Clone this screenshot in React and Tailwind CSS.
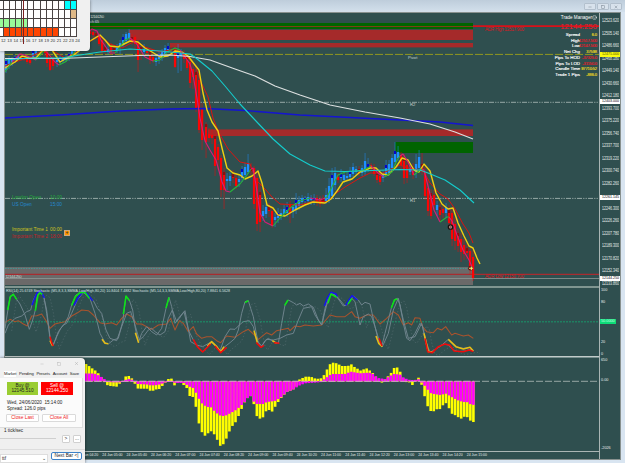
import { Minus, Square, X, Smile } from 'lucide-react';

// [x, high, bodyTop, bodyBottom, low, up]
const candles = [
    [6, 58, 61, 70, 73, 1], [9, 56, 59, 66, 69, 1], [12, 57, 59, 64, 66, 1], [15, 55, 57, 60, 63, 1], [18, 54, 56, 58, 60, 1], [21, 53, 56, 58, 60, 0],
    [24, 55, 57, 59, 61, 0], [27, 55, 58, 62, 64, 0], [30, 57, 60, 63, 65, 0], [33, 44, 50, 57, 59, 1], [36, 46, 48, 54, 57, 1], [39, 44, 48, 51, 54, 1],
    [42, 45, 48, 50, 52, 0], [45, 46, 49, 53, 56, 0], [47, 50, 52, 63, 67, 0], [50, 54, 56, 70, 71, 0], [53, 56, 58, 66, 70, 0], [57, 56, 60, 62, 67, 1],
    [60, 54, 59, 62, 64, 1], [63, 57, 59, 61, 63, 1], [66, 55, 57, 60, 62, 1], [69, 52, 54, 58, 61, 1], [72, 48, 51, 55, 58, 1], [75, 46, 49, 53, 56, 1],
    [78, 40, 44, 52, 55, 1], [81, 34, 38, 46, 50, 1], [84, 30, 34, 40, 44, 1], [87, 28, 32, 36, 40, 1], [90, 29, 31, 34, 38, 0], [93, 30, 32, 35, 38, 0],
    [96, 31, 33, 36, 38, 0], [99, 33, 36, 44, 46, 0], [102, 37, 40, 51, 54, 0], [105, 42, 47, 51, 54, 0], [108, 44, 49, 52, 55, 1], [111, 43, 47, 52, 55, 0],
    [114, 45, 48, 51, 54, 0], [117, 44, 48, 51, 53, 1], [120, 40, 43, 47, 54, 1], [123, 34, 37, 45, 47, 1], [126, 32, 34, 41, 44, 1], [129, 29, 33, 39, 41, 1],
    [132, 34, 37, 42, 45, 0], [135, 35, 37, 44, 50, 0], [138, 40, 43, 60, 72, 0], [141, 44, 47, 51, 60, 0], [144, 44, 49, 52, 57, 1], [147, 48, 51, 53, 56, 0],
    [150, 49, 52, 60, 64, 0], [153, 53, 57, 61, 63, 0], [156, 54, 58, 62, 66, 1], [159, 52, 54, 59, 64, 1], [162, 49, 51, 58, 61, 1], [165, 45, 48, 54, 57, 1],
    [168, 43, 46, 50, 53, 1], [171, 46, 49, 51, 54, 0], [175, 47, 50, 67, 68, 0], [178, 44, 53, 58, 73, 1], [181, 49, 53, 56, 71, 1], [184, 50, 53, 59, 63, 0],
    [187, 54, 57, 68, 70, 0], [190, 59, 62, 83, 88, 0], [193, 63, 69, 77, 89, 0], [196, 69, 72, 108, 112, 0], [199, 76, 80, 130, 133, 0], [202, 103, 108, 140, 150, 0],
    [206, 122, 124, 142, 158, 0], [209, 128, 134, 138, 142, 0], [212, 129, 135, 138, 144, 0], [215, 134, 136, 166, 176, 0], [218, 144, 147, 160, 170, 0],
    [221, 155, 158, 190, 197, 0], [224, 168, 172, 190, 209, 0], [227, 173, 179, 181, 190, 1], [230, 172, 176, 181, 186, 1], [233, 170, 174, 178, 183, 0],
    [236, 175, 178, 186, 189, 0], [239, 175, 179, 182, 187, 1], [242, 166, 169, 178, 182, 1], [245, 163, 167, 175, 177, 1], [248, 154, 163, 172, 174, 1],
    [251, 163, 168, 171, 175, 0], [254, 166, 168, 204, 209, 0], [257, 172, 178, 224, 231, 0], [260, 183, 192, 222, 232, 0], [263, 205, 211, 216, 221, 1],
    [266, 203, 207, 214, 218, 1], [269, 203, 207, 211, 217, 0], [272, 206, 211, 226, 228, 0], [275, 213, 217, 220, 227, 1], [278, 208, 213, 218, 223, 1],
    [281, 209, 213, 216, 220, 1], [284, 205, 209, 214, 217, 1], [287, 202, 207, 213, 217, 1], [290, 201, 204, 213, 223, 0], [293, 204, 207, 212, 218, 1],
    [296, 193, 200, 210, 214, 1], [299, 196, 200, 206, 210, 1], [302, 195, 198, 202, 206, 1], [305, 196, 198, 201, 204, 1], [308, 193, 197, 201, 204, 1],
    [311, 195, 198, 200, 205, 1], [314, 194, 198, 200, 205, 1], [317, 195, 198, 203, 206, 0], [320, 196, 199, 204, 207, 0], [323, 195, 198, 202, 205, 0],
    [326, 188, 195, 201, 204, 1], [329, 178, 186, 200, 203, 1], [332, 168, 175, 196, 199, 1], [335, 167, 173, 185, 190, 1], [338, 173, 177, 180, 183, 0],
    [341, 169, 174, 178, 182, 1], [344, 172, 175, 180, 183, 1], [347, 172, 176, 178, 181, 1], [350, 167, 171, 177, 181, 1], [353, 163, 167, 174, 177, 1],
    [356, 166, 169, 172, 175, 1], [359, 166, 169, 173, 176, 0], [362, 165, 168, 173, 176, 1], [365, 153, 161, 172, 175, 1], [368, 158, 164, 167, 172, 1],
    [371, 163, 165, 168, 172, 0], [374, 164, 167, 174, 176, 0], [377, 169, 172, 180, 183, 0], [380, 172, 176, 182, 185, 0], [383, 170, 174, 178, 182, 1],
    [386, 160, 165, 174, 177, 1], [389, 160, 164, 173, 176, 1], [392, 154, 158, 168, 171, 1], [395, 142, 151, 162, 165, 1], [398, 146, 152, 158, 161, 1],
    [401, 152, 155, 165, 169, 0], [404, 154, 158, 178, 184, 0], [407, 160, 165, 178, 183, 0], [410, 163, 168, 172, 175, 1], [413, 163, 168, 175, 179, 0],
    [416, 154, 164, 172, 178, 1], [419, 150, 157, 168, 171, 1], [422, 153, 164, 171, 175, 0], [425, 165, 172, 196, 200, 0], [428, 179, 188, 211, 216, 0],
    [431, 189, 193, 216, 219, 0], [434, 190, 195, 205, 210, 0], [437, 201, 205, 210, 216, 1], [440, 203, 207, 215, 222, 0], [443, 204, 209, 213, 218, 0],
    [446, 203, 207, 213, 218, 1], [449, 205, 210, 223, 228, 0], [452, 209, 213, 239, 246, 0], [455, 218, 224, 241, 250, 0], [458, 229, 233, 246, 252, 0],
    [461, 233, 239, 252, 262, 0], [464, 239, 245, 254, 260, 0], [467, 243, 248, 253, 259, 0], [470, 248, 251, 270, 275, 0], [473, 248, 257, 278, 281, 0],
];

const MA_BLUE = '5,118 60,115 120,111 170,109 205,108.5 245,110.5 300,115 340,117 400,120 440,122 473,125.5';
const MA_WHITE = '5,58.5 60,58.5 100,57 140,55.5 170,55 190,56.5 210,60 235,69 255,76 275,86 300,95 330,105 365,112 400,118 430,124 455,132 473,139';
const MA_CYAN = '5,60 30,58 62,58 80,55 100,52 130,49 160,51 190,54 196,58 212,71 225,86 240,104 255,120 273,139 290,154 310,165 325,171 345,171.5 400,169.5 420,170 428,173 445,180 460,190 474,203';
const MA_YELLOW = '5,68 15,62 22,56 30,58 36,58 42,51 52,50 60,62 67,58 75,54 83,48 90,41 100,35 105,40 110,46 118,47 124,44 130,41 138,42 145,48 152,52 160,57 168,56 175,51 182,52 188,56 195,65 199,70 203,93 207,110 212,122 218,131 222,148 227,168 233,173 240,175 245,179 252,176 258,171 262,183 267,205 273,208 278,215 285,216 295,210 305,205 313,202 325,203 331,199 337,191 343,182 352,179 360,172 370,168 376,168 382,174 388,175 396,167 402,158 408,160 414,170 419,172 424,164 430,171 436,193 442,204 448,209 453,208 458,223 464,236 469,246 473,248 477,258 480,264';
const MA_RED = '5,66 15,62 28,58 40,52 50,49 65,58 75,53 85,44 100,36 110,44 122,48 135,41 145,47 160,52 175,49 185,55 195,65 201,82 208,97 213,118 219,133 228,149 240,162 250,164 256,180 265,189 272,197 280,204 300,205 315,201 327,202 335,194 345,187 360,178 370,173 383,173 400,165 408,168 415,169 424,172 430,183 440,194 448,199 455,209 463,224 469,233 473,243';

const fastDown = [
    '12,62 20,54 25,55 36,60', '45,50 55,62 59,65', '84,36 92,29 97,31 101,40 110,53 115,53', '130,38 136,43 145,57 153,61',
    '180,50 183,54 190,64 193,75 197,98 200,118 205,141 210,150 216,160 222,182 226,191 230,192', '251,169 253,168 256,185 260,213 265,222 273,226',
    '310,198 320,200 325,198', '371,166 378,173 384,177', '400,156 403,154 408,162 414,175',
    '422,169 424,170 429,190 434,210 440,222', '449,217 452,221 457,235 463,250 469,260 473,269',
];
const fastUp = [
    '5,72 12,62', '36,60 45,50', '59,65 65,62 72,56 84,36', '115,53 120,47 125,40 130,38', '153,61 160,60 167,52 175,48 180,50',
    '230,192 240,184 247,175 251,169', '273,226 280,218 290,208 300,201 310,198', '325,198 327,197 333,185 338,175 345,172 355,171 364,170 371,166',
    '384,177 392,172 397,160 400,156', '414,175 420,170 422,169', '440,222 447,217 449,217',
];

const prices = [
    '12523.620', '12505.140', '12486.660', '12468.180', '12449.140', '12430.660', '12412.180', '12393.700', '12375.220', '12356.740', '12337.700',
    '12319.220', '12300.740', '12282.260', '12263.780', '12246.300', '12226.260', '12207.780', '12189.300', '12170.820', '12152.340', '12133.860',
];

const times = [
    '04:20', '05:00', '05:40', '06:20', '07:00', '07:40', '08:20', '09:00', '09:40', '10:20', '11:00', '11:40', '12:20', '13:00', '13:40', '14:20', '15:00',
];

const trade = [
    ['Spread', '6.0', 'y'], ['High', '12517.500', 'r'], ['Low', '12147.500', 'r'], ['Net Chg', '37598', 'y'], ['Pips To HOD', '-37325.0', 'r'],
    ['Pips To LOD', '-31150.0', 'r'], ['Candle Time', '97710:52', 'y'], ['Trade 1 Pips', '-886.0', 'y'],
];

// histogram edges, interpolated to one value per bar
const outer = [
    [86, 364], [89, 366], [93, 369], [96, 371], [99, 374], [102, 378], [105, 383], [108, 385.7], [117, 386.7], [120, 383.3], [123, 380.6], [126, 376], [129, 376], [132, 378.5],
    [135, 384], [138, 388.7], [147, 388.7], [150, 390.7], [154, 390.7], [157, 389], [160, 389], [163, 385], [166, 382], [169, 378.3], [172, 378.7], [175, 386.7], [178, 382], [182, 382],
    [184, 385.7], [187, 388.3], [190, 396.7], [193, 397], [196, 407.3], [199, 424], [202, 432.3], [205, 435.7], [208, 433.3], [212, 430.7], [215, 435.7], [218, 441.3], [221, 447.3],
    [224, 443.3], [227, 437.3], [230, 430], [233, 425], [236, 421.7], [239, 415], [242, 408], [245, 401.7], [248, 397.7], [251, 396], [254, 404.7], [257, 416.7], [260, 418.7],
    [263, 417.3], [266, 411.3], [269, 410], [272, 411.7], [275, 407], [278, 402.3], [281, 398.3], [284, 395], [287, 392], [293, 389.7], [296, 387.7], [299, 379.7], [302, 378.3],
    [305, 376.7], [311, 376.7], [314, 378.3], [320, 379], [323, 376.7], [326, 371.7], [329, 365], [332, 362.7], [335, 362.7], [338, 364], [342, 366], [348, 366], [351, 364],
    [354, 366.7], [357, 368.3], [360, 370.7], [363, 369.7], [366, 368], [369, 370], [372, 372], [375, 376], [378, 378.5], [382, 382.7], [385, 379], [388, 376.3], [391, 373],
    [394, 368], [397, 367.3], [400, 371.3], [403, 378], [406, 382], [409, 382], [412, 385.7], [415, 380.5], [418, 376.7], [421, 382.7], [424, 394], [427, 405], [430, 410.7],
    [433, 412], [436, 409], [439, 410], [442, 406.7], [445, 402], [448, 405.7], [451, 413.3], [454, 414.7], [457, 416], [460, 419], [463, 418], [466, 415], [469, 420], [474, 422.3],
];
const inner = [
    [86, 373.5], [93, 373.5], [96, 374], [100, 376], [105, 379.5], [108, 381.5], [111, 382.3], [120, 382.3], [125, 380], [129, 379], [133, 380], [138, 384], [147, 384.5], [151, 385.5],
    [158, 385], [164, 383], [170, 380.3], [175, 383], [184, 383], [190, 387], [193, 388], [196, 393], [199, 399], [203, 405], [208, 407], [212, 407.5], [215, 412], [218, 414],
    [221, 416], [225, 416], [230, 413.5], [236, 410], [239, 407.5], [245, 401.7], [248, 397.7], [251, 396], [254, 402], [257, 404], [263, 404], [267, 402], [275, 401], [281, 397.5],
    [287, 392], [293, 389.7], [299, 385.7], [305, 383.3], [320, 382.3], [323, 380], [326, 378], [329, 375.5], [332, 374], [345, 374], [351, 371.7], [360, 373.3], [369, 372.7],
    [372, 373.3], [378, 378], [385, 379], [390, 376], [394, 374], [400, 374.5], [404, 378], [410, 380], [416, 380], [419, 379], [421, 382], [424, 385], [427, 389], [431, 393.5],
    [440, 395], [446, 393.7], [450, 396], [457, 400], [463, 402], [467, 402], [470, 404], [474, 405],
];

const ZERO = 381.3;

function valueAt(points, x) {
    const i = points.findIndex((p) => p[0] >= x);
    if (i <= 0) return points[0][1];
    const [x0, y0] = points[i - 1];
    const [x1, y1] = points[i];
    return y0 + ((y1 - y0) * (x - x0)) / (x1 - x0);
}

const bars = Array.from({ length: 128 }, (_, i) => 473.4 - (127 - i) * 3.05);

function Bar({ x, y, color }) {
    return <rect x={x - 1.3} y={Math.min(y, ZERO)} width="2.6" height={Math.max(0.8, Math.abs(y - ZERO))} fill={color} />;
}

function Line({ points, color, w = 1 }) {
    return <polyline points={points} fill="none" stroke={color} strokeWidth={w} strokeLinejoin="round" />;
}

function PriceChart() {
    return (
        <svg className="block h-[273px] w-[594px]" viewBox="5 13 594 273" fontFamily="Liberation Sans">
            <rect x="5" y="23" width="468" height="6" fill="#006400" />
            <rect x="5" y="26" width="468" height="0.9" fill="#8b3a1c" />
            <rect x="129" y="29.8" width="344" height="10.2" fill="#a52a2a" />
            <rect x="170" y="43" width="303" height="4.4" fill="#a52a2a" />
            <rect x="208" y="129.4" width="265" height="6.6" fill="#a52a2a" />
            <rect x="395" y="142" width="78" height="11" fill="#006400" />
            <rect x="5" y="267" width="468" height="18" fill="#6b6969" />
            <path d="M5 54.4H599" stroke="#91991f" strokeWidth="1" strokeDasharray="8 2" />
            <path d="M5 102.3H599M5 198.4H599" stroke="#a3b3b0" strokeWidth="0.9" strokeDasharray="5 1.2 1.2 1.2 1.2 1.2" />
            <path d="M5 268.4H471" stroke="#3ba7a4" strokeWidth="0.8" strokeDasharray="1.6 1" />
            <path d="M5 274.3H599" stroke="#a82c30" strokeWidth="1.3" />
            <path d="M5 278.5H599" stroke="#8e9896" strokeWidth="0.8" />
            <path d="M473 26.2H599" stroke="#da1019" strokeWidth="1.7" />
            <g fontSize="4.2" fill="#c7d0ce">
                <text x="408" y="59">Pivot</text>
                <text x="410" y="106">R2</text>
                <text x="410" y="202">R1</text>
                <text x="5.5" y="277.7" textLength="16">12144.250</text>
                <text x="90" y="18" textLength="14">12144.250</text>
                <text x="90" y="23" textLength="9">ch 65</text>
            </g>
            <g fontSize="4.6" fill="#d61a22">
                <text x="485" y="30.6" textLength="39">ADR High 12517.900</text>
                <text x="485" y="278.4" textLength="39">ADR Low 12150.700</text>
            </g>

            {candles.map(([x, hi, top, bottom, lo, up], i) => (
                <g key={x} fill={up ? '#1e90ff' : '#fa0505'}>
                    <rect x={x - 0.3} y={hi} width="0.7" height={lo - hi} opacity="0.7" />
                    <rect x={x - 1.1} y={top} width="2.3" height={Math.max(1, bottom - top)} />
                    {i % 3 === 0 && <rect x={x - 1.1} y={top} width="2.2" height={Math.min(3, bottom - top)} fill={up ? '#0505c8' : '#8b1010'} />}
                </g>
            ))}

            <Line points={MA_BLUE} color="#1414d2" w={1.3} />
            <Line points={MA_RED} color="#dc1410" />
            <Line points={MA_YELLOW} color="#f0d010" w={1.4} />
            {fastDown.map((p) => <Line key={p} points={p} color="#d61e78" w={1.1} />)}
            {fastUp.map((p) => <Line key={p} points={p} color="#28b43c" w={1.1} />)}
            <Line points={MA_WHITE} color="#dce0e0" w={1.2} />
            <Line points={MA_CYAN} color="#14cdcd" w={1.1} />

            <circle cx="450.5" cy="227" r="2.2" fill="#d8b0a8" stroke="#1b1111" strokeWidth="1.3" />
            <path d="M449.5 226l2 2m0-2l-2 2" stroke="#4a1010" strokeWidth="0.6" />
            <circle cx="470.5" cy="268.3" r="2.3" fill="#521515" />
            <path d="M469 268.3h4M471.3 266.5v3.5" stroke="#fff36b" strokeWidth="1.1" />
        </svg>
    );
}

// three units per pixel
const STOCH_A = '15,135 24,78 30,40 40,32 50,48 60,62 75,95 88,138 98,110 106,80 112,35 120,28 130,35 140,80 150,160 158,188 170,160 182,135 195,120 205,100 215,65 228,35 250,24 268,40 285,90 300,150 315,178 325,182 340,170 355,165 368,115 378,40 388,50 398,80 405,130 415,178 425,150 440,130 455,145 470,155 485,135 498,75 507,42 515,70 525,120 535,105 552,85 565,140 580,170 595,192 608,206 622,190 635,178 650,188 662,206 672,192 690,178 705,165 715,140 725,90 735,55 745,52 752,75 760,100 767,140 775,180 783,192 795,172 805,165 820,175 835,180 845,120 855,65 865,50 880,58 890,65 900,60 910,68 925,62 940,72 955,110 965,125 975,75 985,40 995,30 1010,40 1030,68 1040,65 1055,45 1065,55 1080,125 1090,100 1105,92 1115,100 1125,130 1135,170 1145,190 1155,150 1165,110 1175,70 1185,48 1192,45 1200,65 1210,120 1220,165 1230,172 1245,150 1260,120 1268,130 1275,170 1285,205 1297,208 1310,195 1330,182 1345,185 1360,200 1375,205 1395,203 1410,198 1420,203';
const STOCH_B = '15,150 25,125 45,105 65,98 80,85 92,80 100,50 110,30 122,22 132,42 140,90 152,180 160,185 175,145 190,125 200,120 215,90 232,50 250,28 265,38 280,52 292,75 305,90 318,140 330,165 350,172 365,130 380,90 392,85 405,125 418,170 430,160 445,140 455,135 465,145 480,155 495,145 505,105 517,80 530,115 545,95 555,82 572,175 590,185 608,190 635,175 660,202 675,160 690,137 705,138 718,125 730,115 748,112 760,130 770,170 785,188 800,168 820,170 840,165 860,155 880,150 895,110 910,75 935,70 945,95 965,125 980,65 995,27 1010,38 1035,68 1060,38 1075,50 1085,65 1095,57 1110,62 1125,130 1140,180 1147,190 1165,150 1180,80 1195,45 1210,110 1225,165 1245,160 1265,120 1280,180 1290,207 1320,190 1345,168 1365,190 1390,195 1410,192 1420,203';
const RSI = '15,118 30,108 45,115 55,112 70,122 82,128 95,98 110,97 125,92 140,115 150,135 165,122 180,118 195,115 215,98 230,90 245,80 265,82 280,95 300,118 315,122 335,118 350,125 365,105 380,92 395,100 410,122 425,122 440,130 455,138 475,125 500,122 512,105 525,140 538,112 550,120 565,145 580,130 590,152 605,165 620,160 635,160 650,172 662,178 680,158 705,162 730,145 745,138 760,152 775,168 800,148 815,155 830,142 865,135 870,142 885,128 900,130 915,125 940,128 965,125 990,95 1010,100 1035,100 1055,85 1065,100 1080,105 1100,95 1120,95 1140,122 1160,105 1180,85 1195,95 1210,125 1225,118 1235,125 1245,103 1260,105 1268,130 1280,145 1300,148 1312,135 1325,140 1337,130 1355,155 1365,150 1390,158 1405,155 1420,165';

const highlights = [
    ['#1414f0', ['96,66 104,45 112,27 122,22 133,44', '222,66 235,42 250,24 262,32 278,52', '973,68 983,42 993,27 1008,32 1012,40', '1037,66 1048,48 1056,37 1072,50']],
    ['#0ae614', ['23,80 31,40 40,33 50,48', '106,82 114,35 120,28 127,33', '215,66 226,40 240,28 255,27 268,45', '370,92 378,38 388,52', '498,74 507,42', '735,58 745,52', '854,66 864,50', '984,60 993,32 1010,42', '1044,62 1056,45', '1174,74 1183,50 1192,47']],
    ['#e6be14', ['150,172 158,188', '306,168 315,180 325,181', '406,148 416,178', '622,188 635,175 650,190 662,206 672,190', '762,142 772,178', '817,172 830,180', '1128,158 1136,180 1147,190', '1272,150 1285,205 1300,206', '1345,168 1368,190 1390,197 1410,192 1420,203']],
    ['#f00a0a', ['150,160 155,178 160,188', '580,168 592,190 608,206 632,182', '645,188 662,208 680,192', '769,178 783,192 792,186', '822,178 838,180', '1137,165 1146,188', '1275,165 1283,205 1297,208 1315,190 1335,182 1350,186 1362,203 1390,205 1408,200 1420,205']],
];

function Oscillator() {
    return (
        <svg className="block h-[68px] w-[594px]" viewBox="15 14 1782 204">
            <path d="M15 115.500H1797" stroke="#15a56d" strokeWidth="2.500" strokeDasharray="6 3" />
            <polyline points={STOCH_A} transform="translate(20 8)" fill="none" stroke="#60757a" strokeWidth="1.500" strokeDasharray="4 6" />
            <Line points={RSI} color="#a9532d" w={3.2} />
            <Line points={STOCH_A} color="#728790" w={2.8} />
            <Line points={STOCH_B} color="#728790" w={2.8} />
            {highlights.map(([color, segs]) => segs.map((s) => <Line key={color + s} points={s} color={color} w={4.6} />))}
            <text x="18" y="25" fontSize="13" fill="#dde3e2" fontFamily="Liberation Sans" textLength="672" lengthAdjust="spacingAndGlyphs">
                RSI(14) 25.6749  Stochastic (M5,8,3,3,SMMA,Low/High,80,20) 10.8404 7.4882  Stochastic (M5,14,3,3,SMMA,Low/High,80,20) 7.8841 6.5628
            </text>
        </svg>
    );
}

function Histogram() {
    return (
        <svg className="block h-[93px] w-[594px]" viewBox="5 358 594 93">
            <path d="M5 381.3H599" stroke="#97a5a3" strokeWidth="1" strokeDasharray="7 2" />
            {bars.map((x) => (
                <g key={x}>
                    <Bar x={x} y={valueAt(outer, x)} color="#ffff00" />
                    <Bar x={x} y={valueAt(inner, x)} color="#ff00ff" />
                </g>
            ))}
            <path d="M85 381.3H474" stroke="#d6a2d4" strokeWidth="0.8" strokeDasharray="7 2" />
        </svg>
    );
}

function TradeManager() {
    return (
        <div className="absolute right-[2px] top-[1px] flex w-[80px] flex-col items-end text-[4.4px] leading-[5.7px] text-white">
            <div className="flex h-[7px] items-center text-[4.6px]">
                Trade Manager <Smile className="h-[5px] w-[5px]" />
            </div>
            <div className="mb-[1px] h-[10px] text-[7.8px] leading-[11px] text-[#ee1d2b]">12144.250</div>
            {trade.map(([label, value, tone]) => (
                <div key={label} className="flex [-webkit-text-stroke:0.15px]">
                    <span className="whitespace-nowrap">{label}</span>
                    <span className={`flex w-[17px] justify-end text-[4.1px] tracking-[-0.15px] ${tone === 'y' ? 'text-[#ecd91c]' : 'text-[#e01c28]'}`}>{value}</span>
                </div>
            ))}
        </div>
    );
}

function PriceAxis() {
    return (
        <div className="relative flex h-[274px] flex-col justify-between pt-[6px] text-[3.6px] leading-[5px] text-[#e6ebea]">
            {prices.map((p, i) => (
                <div key={p} className={`origin-center scale-y-[1.250] pl-[2px] ${i === 14 ? 'invisible' : ''}`}>{p}</div>
            ))}
            <div className="absolute left-0 top-[38.500px] w-[20px] bg-[#f8fa10] pl-[2px] text-[#555500]">12475.000</div>
            <div className="absolute left-0 top-[86px] w-[20px] bg-white pl-[2px] text-black">12403.000</div>
            <div className="absolute left-0 top-[182px] w-[20px] bg-white pl-[2px] text-black">12261.145</div>
            <div className="absolute left-0 top-[263px] w-[20px] bg-white pl-[2px] text-black">12144.250</div>
        </div>
    );
}

const COLS = Array.from({ length: 13 }, (_, i) => i + 12);
const sessions = [
    { from: 11, to: 12, fill: 'bg-[#00ffff]' },
    { from: 12, to: 12, fill: 'bg-[#deb887]' },
    { from: 0, to: 4, fill: 'bg-[#98fb98]' },
    { from: 1, to: 9, fill: 'bg-[#ff4500]' },
];

function SessionMap() {
    return (
        <div className="absolute left-0 top-0 h-[51px] w-[90px] overflow-hidden rounded-br-[4px] bg-[#f0f0f0] shadow-[0_0_3px_rgba(0,0,0,0.5)]">
            <div className="w-[77px] border-t border-[#333]">
                {sessions.map((s, r) => (
                    <div key={r} className="grid h-[9px] grid-cols-[4px_repeat(12,1fr)]">
                        {COLS.map((c, i) => (
                            <div key={c} className={`border-b border-r border-[#4b4545] ${i >= s.from && i <= s.to ? s.fill : 'bg-white'}`} />
                        ))}
                    </div>
                ))}
            </div>
            <div className="flex w-[80px] justify-between pl-[1px] pt-[1px] text-[4.2px] leading-[5px] text-[#333]">
                {COLS.map((c) => <span key={c}>{c}</span>)}
            </div>
            <div className="absolute left-[23px] top-0 h-[44px] w-px bg-[#7b2020]" />
        </div>
    );
}

function OrderPanel() {
    return (
        <div className="absolute bottom-0 left-0 flex h-[105px] w-[85px] flex-col overflow-hidden rounded-tr-[4px] bg-[#f0f0f0] text-[4.8px] leading-[6px] text-[#222] shadow-[0_0_3px_rgba(0,0,0,0.6)]">
            <div className="flex h-[12px] items-center justify-end gap-[13px] pr-[6px] text-[#a5a5a5]">
                <Minus className="h-[4px] w-[4px]" />
                <Square className="h-[4px] w-[4px]" />
                <X className="h-[5px] w-[5px]" />
            </div>
            <div className="flex h-[8px] items-center justify-between pl-[4px] pr-[6px] text-[4.2px] tracking-[-0.1px]">
                <span className="bg-white">Market</span>
                <span>Pending</span>
                <span>Presets</span>
                <span>Account</span>
                <span>Save</span>
            </div>
            <div className="mr-[2px] h-[51px] border-b border-r border-[#ddd] bg-[#fbfbfb] pt-[4px]">
                <div className="flex gap-[3px] pl-[7px] text-center text-[4.7px] leading-[5.500px]">
                    <div className="h-[13px] w-[31px] bg-[#9acd32] pt-[1px]">Buy @<br />12145.510</div>
                    <div className="h-[13px] w-[32px] bg-[#ff0000] pt-[1px] text-white">Sell @<br />12144.250</div>
                </div>
                <div className="whitespace-nowrap pl-[7px] pt-[5px] text-[4.6px]">Wed, 24/06/2020 &nbsp;15:14:00</div>
                <div className="pl-[7px] text-[4.6px]">Spread: 126.0 pips</div>
                <div className="flex gap-[3px] pl-[6px] pt-[2px] text-center text-[#ee1c25]">
                    <div className="h-[8px] w-[33px] rounded-[1px] border border-[#dadada] bg-white">Close Last</div>
                    <div className="h-[8px] w-[34px] rounded-[1px] border border-[#dadada] bg-white">Close All</div>
                </div>
            </div>
            <div className="pl-[4px] text-[4.6px]">1 tick/sec</div>
            <div className="flex h-[9px] items-center gap-[3px] pr-[4px] text-center">
                <div className="mr-[3px] h-px flex-1 bg-[#cfcfcf]" />
                <div className="h-[8px] w-[8px] rounded-[1px] border border-[#d0d0d0] bg-white">&gt;</div>
                <div className="h-[8px] w-[8px] rounded-[1px] border border-[#d0d0d0] bg-white">...</div>
            </div>
            <div className="mt-[6px] flex flex-1 items-start border-t border-[#ddd]">
                <div className="mt-[4px] flex h-[9px] w-[48px] items-center justify-between border border-[#ddd] bg-white px-[1px]">
                    <span>ttf</span><span>⌄</span>
                </div>
                <div className="ml-[3px] mt-[2px] h-[8px] w-[31px] rounded-[2px] border border-[#3c82c8] bg-white text-center">Next Bar &lt;|</div>
            </div>
        </div>
    );
}

export default function App() {
    return (
        <div className="relative flex h-[463px] w-[625px] flex-col overflow-hidden bg-[#d9e5f1] font-['Liberation_Sans',sans-serif]">
            <div className="flex h-[12px] items-center justify-end gap-px bg-gradient-to-b from-[#becddb] to-[#d3e0ec] pr-[3px] pt-[1px]">
                {[Minus, Square, X].map((Icon, i) => (
                    <div key={i} className="flex h-[7px] w-[12px] items-center justify-center rounded-[1px] border border-[#b3c0cd] bg-[#d8e2ec]">
                        <Icon className="h-[4px] w-[4px] text-[#7b8793]" strokeWidth={3} />
                    </div>
                ))}
            </div>
            <div className="ml-[4px] flex h-[448px] w-[617px] border-b border-l border-r border-t border-[#88918f] bg-[#2f4f4f]">
                <div className="flex w-[595px] flex-col border-r border-[#aab5b4]">
                    <div className="relative h-[273px]">
                        <PriceChart />
                        <TradeManager />
                        <div className="absolute left-[7px] top-[182px] grid grid-cols-[38px_12px] text-[4.8px] leading-[6.500px]">
                            <span className="text-[#21a83a]">London Open</span><span className="text-[#21a83a]">10:00</span>
                            <span className="text-[#2588cf]">US Open</span><span className="text-[#2588cf]">15:00</span>
                        </div>
                        <div className="absolute left-[7px] top-[214px] grid grid-cols-[38px_13px] whitespace-nowrap text-[4.8px] leading-[6.500px]">
                            <span className="text-[#cfc51d]">Important Time 1</span><span className="text-[#cfc51d]">00:00</span>
                            <span className="text-[#c42127]">Important Time 2</span><span className="text-[#c42127]">18:00</span>
                        </div>
                        <div className="absolute left-[59px] top-[217px] flex h-[6px] w-[6px] items-center justify-center border border-[#d2a87b] bg-[#ff9800] text-[5px] font-bold text-[#432]">+</div>
                    </div>
                    <div className="h-[2px] w-[594px] bg-[#7f9590]" />
                    <Oscillator />
                    <div className="h-[2px] border-b border-[#78908e] bg-[#c2cbca]" />
                    <Histogram />
                    <div className="h-px bg-[#aab5b4]" />
                    <div className="flex flex-1 pl-[73px] text-[3.500px] leading-[7px] text-[#e6ebea]">
                        {times.map((t) => (
                            <div key={t} className="w-[24.300px] shrink-0 scale-y-[1.250] whitespace-nowrap">24 Jun {t}</div>
                        ))}
                    </div>
                </div>
                <div className="flex flex-1 flex-col text-[3.800px] leading-[5px] text-[#e6ebea]">
                    <PriceAxis />
                    <div className="flex h-[70px] flex-col pl-[1px]">
                        <span className="mt-px">100</span>
                        <span className="mt-[7px]">80</span>
                        <span className="-ml-px mt-[14px] w-[16px] bg-[#0ddc78] pl-[1px] text-[#c6ffe0]">50.0000</span>
                        <span className="mt-[16px]">20</span>
                        <span className="mt-[7px]">0</span>
                    </div>
                    <div className="flex h-[94px] flex-col pl-[1px]">
                        <span className="mt-px">650</span>
                        <span className="mt-[15px]">0.00</span>
                        <span className="mt-auto">-2026</span>
                    </div>
                </div>
            </div>
            <SessionMap />
            <OrderPanel />
        </div>
    );
}
